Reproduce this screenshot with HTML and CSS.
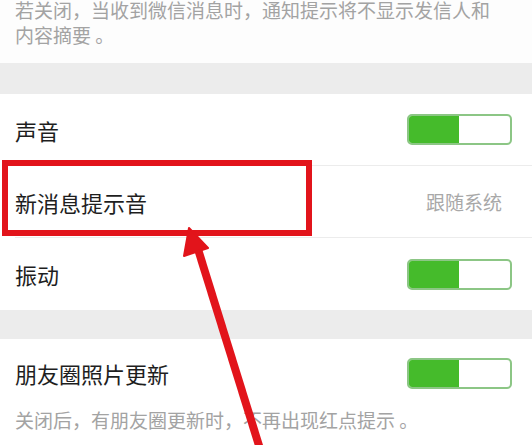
FILE: index.html
```html
<!DOCTYPE html>
<html lang="zh-CN">
<head>
<meta charset="utf-8">
<title>新消息通知</title>
<link rel="stylesheet" href="styles.css">
</head>
<body>
<div class="page">
  <div class="note note-top">若关闭，当收到微信消息时，通知提示将不显示发信人和<br>内容摘要 。</div>
  <div class="gap"></div>
  <div class="group">
    <div class="row"><span class="label">声音</span><span class="switch on"><span class="knob"></span></span></div>
    <div class="row"><span class="label">新消息提示音</span><span class="value">跟随系统</span></div>
    <div class="row last"><span class="label">振动</span><span class="switch on"><span class="knob"></span></span></div>
  </div>
  <div class="gap gap2"></div>
  <div class="group">
    <div class="row row-short last"><span class="label">朋友圈照片更新</span><span class="switch on"><span class="knob"></span></span></div>
  </div>
  <div class="note note-bottom">关闭后，有朋友圈更新时，不再出现红点提示 。</div>

  <div class="highlight"></div>
  <svg class="arrow" width="532" height="445" viewBox="0 0 532 445" xmlns="http://www.w3.org/2000/svg">
    <line x1="197" y1="246" x2="261" y2="452" stroke="#e2141b" stroke-width="8"/>
    <polygon points="189,228 208,248 184,256" fill="#e2141b" stroke="#e2141b" stroke-width="2" stroke-linejoin="round"/>
  </svg>
</div>
</body>
</html>
```
FILE: styles.css
```css
html, body {
  margin: 0;
  padding: 0;
  background: #ffffff;
}
body {
  font-family: "Noto Sans CJK SC", "Noto Sans", sans-serif;
  width: 532px;
  height: 445px;
  overflow: hidden;
}
.page {
  position: relative;
  width: 532px;
  height: 445px;
  overflow: hidden;
}
.note {
  color: #a3a3a3;
  font-size: 19px;
  line-height: 25px;
  padding: 0 5px 0 15px;
  white-space: nowrap;
}
.note-top {
  padding-top: 1px;
  margin-top: -4px;
  padding-bottom: 16px;
  background: #fdfdfd;
}
.gap {
  height: 31px;
  background: #ececec;
}
.gap2 {
  height: 29px;
}
.group {
  background: #ffffff;
}
.row {
  display: flex;
  align-items: center;
  justify-content: space-between;
  height: 71px;
  margin-left: 15px;
  padding-right: 20px;
  border-bottom: 1px solid #ececec;
}
.row.last {
  border-bottom: none;
  height: 72px;
}
.row.row-short {
  height: 68px;
}
.label {
  font-size: 22px;
  color: #1e1e1e;
}
.value {
  font-size: 19px;
  color: #a8a8a8;
  margin-right: 10px;
}
.switch {
  display: flex;
  width: 105px;
  height: 31px;
  box-sizing: border-box;
  border: 2px solid #8cc685;
  border-radius: 5px;
  background: #ffffff;
  overflow: hidden;
}
.switch.on::before {
  content: "";
  display: block;
  width: 50px;
  height: 100%;
  background: #45bb2b;
}
.knob {
  flex: 1;
}
.note-bottom {
  background: #ffffff;
}
.highlight {
  position: absolute;
  left: 2px;
  top: 160px;
  width: 310px;
  height: 76px;
  box-sizing: border-box;
  border: 6px solid #e2141b;
}
.arrow {
  position: absolute;
  left: 0;
  top: 0;
}
```
